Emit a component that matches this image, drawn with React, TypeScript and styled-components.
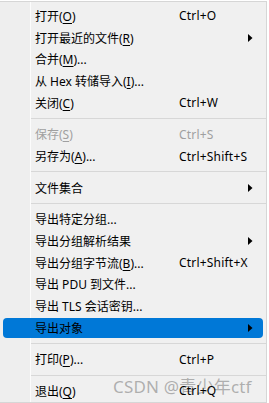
import React from "react";
import styled, { createGlobalStyle } from "styled-components";

type Item =
	| { sep: true }
	| {
			sep?: false;
			label: React.ReactNode;
			shortcut?: string;
			sub?: boolean;
			disabled?: boolean;
			active?: boolean;
	  };

const items: Item[] = [
	{ label: <>打开(<u>O</u>)</>, shortcut: "Ctrl+O" },
	{ label: <>打开最近的文件(<u>R</u>)</>, sub: true },
	{ label: <>合并(<u>M</u>)...</> },
	{ label: <>从 Hex 转储导入(<u>I</u>)...</> },
	{ label: <>关闭(<u>C</u>)</>, shortcut: "Ctrl+W" },
	{ sep: true },
	{ label: <>保存(<u>S</u>)</>, shortcut: "Ctrl+S", disabled: true },
	{ label: <>另存为(<u>A</u>)...</>, shortcut: "Ctrl+Shift+S" },
	{ sep: true },
	{ label: "文件集合", sub: true },
	{ sep: true },
	{ label: "导出特定分组..." },
	{ label: "导出分组解析结果", sub: true },
	{ label: <>导出分组字节流(<u>B</u>)...</>, shortcut: "Ctrl+Shift+X" },
	{ label: "导出 PDU 到文件..." },
	{ label: "导出 TLS 会话密钥..." },
	{ label: "导出对象", sub: true, active: true },
	{ sep: true },
	{ label: <>打印(<u>P</u>)...</>, shortcut: "Ctrl+P" },
	{ sep: true },
	{ label: <>退出(<u>Q</u>)</>, shortcut: "Ctrl+Q" },
];

const App = () => (
	<>
		<GlobalStyle />
		<Menu>
			{items.map((it, i) =>
				it.sep ? (
					<Separator key={i} />
				) : (
					<Row key={i} $active={it.active} $disabled={it.disabled}>
						<Label>{it.label}</Label>
						<Shortcut>{it.shortcut}</Shortcut>
						<Arrow>{it.sub && <SubArrow />}</Arrow>
					</Row>
				)
			)}
			<Watermark>CSDN @青少年ctf</Watermark>
		</Menu>
	</>
);

const SubArrow = () => (
	<svg width="5" height="8" viewBox="0 0 5 8">
		<path d="M0 0 L4.5 4 L0 8 Z" fill="#000" />
	</svg>
);

const GlobalStyle = createGlobalStyle`
	body {
		margin: 0;
		background: #ffffff;
		font-family: "Noto Sans", "Noto Sans CJK SC", sans-serif;
	}
`;

const Menu = styled.div`
	position: relative;
	box-sizing: border-box;
	width: 267px;
	height: 402px;
	margin-top: 1px;
	padding: 3px 0;
	border: 1px solid #d6d6d6;
	border-left: none;
	background: linear-gradient(
		to right,
		#eeeeee 0,
		#eeeeee 30px,
		#fcfcfc 30px,
		#fcfcfc 31px,
		#f0f0f0 31px
	);
`;

const Row = styled.div<{ $active?: boolean; $disabled?: boolean }>`
	display: grid;
	grid-template-columns: 144px 1fr 18px;
	align-items: center;
	height: 21.75px;
	padding-left: 35px;
	box-sizing: border-box;
	font-size: 12px;
	color: ${(p) => (p.$disabled ? "#a0a0a0" : "#000000")};
	position: relative;
	white-space: nowrap;

	&::before {
		content: "";
		display: ${(p) => (p.$active ? "block" : "none")};
		position: absolute;
		left: 3px;
		right: 3px;
		top: 1px;
		bottom: 1px;
		border-radius: 4px;
		background: #0078d7;
		z-index: 0;
	}

	& > * {
		position: relative;
		z-index: 1;
	}

	u {
		text-underline-offset: 2px;
	}
`;

const Label = styled.span``;

const Shortcut = styled.span`
	letter-spacing: 0.2px;
`;

const Arrow = styled.span`
	display: flex;
	align-items: center;
`;

const Separator = styled.div`
	height: 9.75px;
	margin-left: 31px;
	display: flex;
	align-items: center;

	&::after {
		content: "";
		flex: 1;
		height: 1px;
		background: #d7d7d7;
	}
`;

const Watermark = styled.div`
	position: absolute;
	left: 113px;
	bottom: 4px;
	font-family: "Noto Sans", "Noto Sans CJK SC", sans-serif;
	font-size: 17px;
	color: rgba(130, 130, 130, 0.6);
	letter-spacing: 0.2px;
	pointer-events: none;
`;

export default App;
